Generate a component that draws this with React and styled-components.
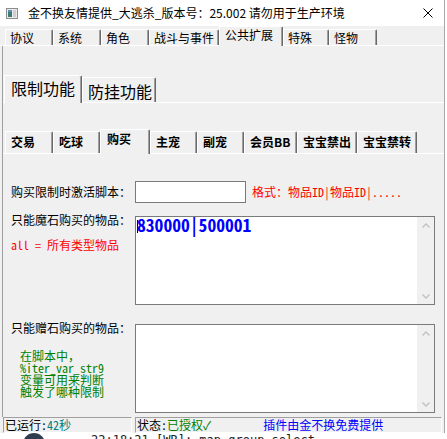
import React from "react";
import styled, { createGlobalStyle } from "styled-components";

const UI = `"Noto Sans CJK SC", "Noto Sans", sans-serif`;
const MONO = `"Noto Sans Mono CJK SC", "Noto Sans CJK SC", "Liberation Mono", monospace`;

const GlobalStyle = createGlobalStyle`
  html, body {
    margin: 0;
    padding: 0;
    background: #ffffff;
  }
  body {
    font-family: ${UI};
    color: #000;
  }
`;

// tab look for each level of the tab control
const TAB = {
  top: { ha: 20, h: 16, fs: 12, lh: 16, pt: 0, pta: 0, fw: 400, pl: 4 },
  mid: { ha: 28, h: 25, fs: 16, lh: 20, pt: 3, pta: 2, fw: 400, pl: 5 },
  sub: { ha: 25, h: 22, fs: 12, lh: 16, pt: 2, pta: 1, fw: 700, pl: 5 },
};

const topTabs = [
  ["协议", 48], ["系统", 48], ["角色", 48], ["战斗与事件", 70],
  ["公共扩展", 64, true], ["特殊", 46], ["怪物", 48],
];
const midTabs = [["限制功能", 78, true], ["防挂功能", 74]];
const subTabs = [
  ["交易", 48], ["吃球", 47], ["购买", 50, true], ["主宠", 47], ["副宠", 47],
  ["会员BB", 53], ["宝宝禁出", 60], ["宝宝禁转", 60],
];

export default function App() {
  return (
    <>
      <GlobalStyle />
      <Window>
        <TitleBar>
          <svg width="12" height="11" viewBox="0 0 12 11">
            <rect x="0.5" y="0.5" width="11" height="10" fill="#ececec" stroke="#8c8c8c" />
            <rect x="2" y="2" width="4" height="7" fill="#3d7a78" />
            <rect x="2" y="2" width="4" height="2" fill="#5b8fb0" />
            <rect x="7" y="2" width="3" height="7" fill="#cfcfcf" />
          </svg>
          <Title>金不换友情提供_大逃杀_版本号：25.002 请勿用于生产环境</Title>
          <svg width="10" height="10" viewBox="0 0 10 10">
            <path d="M0.5 0.5 L9.5 9.5 M9.5 0.5 L0.5 9.5" stroke="#000" strokeWidth="1" />
          </svg>
        </TitleBar>

        <TabStrip $size="top" $pl={5}>
          {topTabs.map(([t, w, a]) => (
            <Tab key={t} $size="top" $w={w} $active={a}>{t}</Tab>
          ))}
        </TabStrip>

        <Panel>
          <TabStrip $size="mid" $pl={1} $mt={29}>
            {midTabs.map(([t, w, a]) => (
              <Tab key={t} $size="mid" $w={w} $active={a}>{t}</Tab>
            ))}
          </TabStrip>

          <TabStrip $size="sub" $pl={2} $mt={26}>
            {subTabs.map(([t, w, a]) => (
              <Tab key={t} $size="sub" $w={w} $active={a}>{t}</Tab>
            ))}
          </TabStrip>

          <Form>
            <Row $center>
              <LabelCol>
                <Label>购买限制时激活脚本：</Label>
              </LabelCol>
              <Input />
              <Hint>格式：物品ID|物品ID|.....</Hint>
            </Row>

            <Row $mt={13}>
              <LabelCol>
                <Label $mt={-4}>只能魔石购买的物品：</Label>
                <Note $color="#ff0000" $mt={11} $pl={0}>all = 所有类型物品</Note>
              </LabelCol>
              <TextBox>
                <TextContent>
                  <Caret />830000|500001
                </TextContent>
                <Scrollbar />
              </TextBox>
            </Row>

            <Row $mt={19}>
              <LabelCol>
                <Label $mt={-4}>只能赠石购买的物品：</Label>
                <Note $color="#008000" $mt={14} $pl={9}>
                  在脚本中，<br />
                  %iter_var_str9<br />
                  变量可用来判断<br />
                  触发了哪种限制
                </Note>
              </LabelCol>
              <TextBox>
                <TextContent />
                <Scrollbar />
              </TextBox>
            </Row>
          </Form>
        </Panel>

        <StatusBar>
          <StatusPane $w={129}>
            已运行:<Colored $c="#008080">42秒</Colored>
          </StatusPane>
          <StatusPane $w={307}>
            状态: <Colored $c="#008000">已授权✓</Colored>
            <Colored $c="#0000ff" $ml={52}>插件由金不换免费提供</Colored>
          </StatusPane>
        </StatusBar>
      </Window>
      <Desktop>
        <Avatar />
        <DesktopText>22:18:21 [WR]: map group select</DesktopText>
      </Desktop>
    </>
  );
}

function Scrollbar() {
  return (
    <ScrollTrack>
      <svg width="8" height="5" viewBox="0 0 8 5">
        <path d="M0.5 4.5 L4 1 L7.5 4.5" fill="none" stroke="#c2c2c2" strokeWidth="1.4" />
      </svg>
      <svg width="8" height="5" viewBox="0 0 8 5">
        <path d="M0.5 0.5 L4 4 L7.5 0.5" fill="none" stroke="#c2c2c2" strokeWidth="1.4" />
      </svg>
    </ScrollTrack>
  );
}

const Window = styled.div`
  width: 445px;
  height: 433px;
  box-sizing: border-box;
  display: flex;
  flex-direction: column;
  background: #f0f0f0;
  border-right: 1px solid #a8a8a8;
`;

const TitleBar = styled.div`
  height: 26px;
  flex: none;
  display: flex;
  align-items: center;
  padding: 0 11px 0 6px;
  background: #ffffff;
`;

const Title = styled.div`
  flex: 1;
  margin-left: 10px;
  font: 12px/16px ${UI};
  white-space: nowrap;
`;

const TabStrip = styled.div`
  flex: none;
  display: flex;
  align-items: flex-end;
  height: ${(p) => TAB[p.$size].ha - 1}px;
  margin-top: ${(p) => p.$mt || 0}px;
  padding-left: ${(p) => p.$pl}px;
  border-bottom: 1px solid #ffffff;
`;

const Tab = styled.div`
  box-sizing: border-box;
  flex: none;
  width: ${(p) => p.$w}px;
  height: ${(p) => (p.$active ? TAB[p.$size].ha : TAB[p.$size].h)}px;
  margin-bottom: ${(p) => (p.$active ? -1 : 0)}px;
  padding: ${(p) => (p.$active ? TAB[p.$size].pta : TAB[p.$size].pt)}px 0 0
    ${(p) => TAB[p.$size].pl + (p.$active ? 1 : 0)}px;
  background: #f0f0f0;
  border-top: 1px solid #ffffff;
  border-left: 1px solid #ffffff;
  border-right: 1px solid #696969;
  box-shadow: inset -1px 0 #a0a0a0;
  border-top-right-radius: 2px;
  font-family: ${UI};
  font-size: ${(p) => TAB[p.$size].fs}px;
  line-height: ${(p) => TAB[p.$size].lh}px;
  font-weight: ${(p) => TAB[p.$size].fw};
  white-space: nowrap;
  overflow: hidden;
`;

const Panel = styled.div`
  flex: 1;
  display: flex;
  flex-direction: column;
  margin-left: 2px;
  border-left: 1px solid #a0a0a0;
`;

const Form = styled.div`
  display: flex;
  flex-direction: column;
  margin-top: 27px;
  padding-left: 8px;
`;

const Row = styled.div`
  display: flex;
  align-items: ${(p) => (p.$center ? "center" : "flex-start")};
  margin-top: ${(p) => p.$mt || 0}px;
`;

const LabelCol = styled.div`
  width: 124px;
  flex: none;
  display: flex;
  flex-direction: column;
`;

const Label = styled.div`
  margin-top: ${(p) => p.$mt || 0}px;
  font: 12px/16px ${MONO};
  white-space: nowrap;
`;

const Note = styled.div`
  margin-top: ${(p) => p.$mt}px;
  padding-left: ${(p) => p.$pl}px;
  color: ${(p) => p.$color};
  font: 12px/12px ${MONO};
  white-space: nowrap;
`;

const Input = styled.div`
  box-sizing: border-box;
  width: 111px;
  height: 22px;
  background: #ffffff;
  border: 1px solid #7a7a7a;
`;

const Hint = styled.div`
  margin-left: 6px;
  color: #ff0000;
  font: 12px/16px ${MONO};
  white-space: nowrap;
`;

const TextBox = styled.div`
  box-sizing: border-box;
  width: 300px;
  height: 89px;
  display: flex;
  background: #ffffff;
  border: 1px solid #7a7a7a;
`;

const TextContent = styled.div`
  flex: 1;
  padding-left: 1px;
  color: #0000ff;
  font: 700 17.6px/16px ${MONO};
  white-space: nowrap;
`;

const Caret = styled.span`
  display: inline-block;
  width: 0;
  height: 13px;
  margin-right: -1px;
  vertical-align: -1px;
  border-left: 1px solid #000;
`;

const ScrollTrack = styled.div`
  width: 17px;
  flex: none;
  display: flex;
  flex-direction: column;
  align-items: center;
  justify-content: space-between;
  padding: 6px 0 5px;
  box-sizing: border-box;
  background: #f0f0f0;
`;

const StatusBar = styled.div`
  flex: none;
  display: flex;
  gap: 3px;
  height: 16px;
  padding-left: 3px;
`;

const StatusPane = styled.div`
  box-sizing: border-box;
  width: ${(p) => p.$w}px;
  height: 16px;
  display: flex;
  align-items: center;
  padding-left: 1px;
  border-top: 1px solid #a0a0a0;
  border-left: 1px solid #a0a0a0;
  border-bottom: 1px solid #ffffff;
  border-right: 1px solid #ffffff;
  font: 12px/14px ${MONO};
  white-space: nowrap;
`;

const Colored = styled.span`
  color: ${(p) => p.$c};
  margin-left: ${(p) => p.$ml || 0}px;
`;

const Desktop = styled.div`
  height: 6px;
  display: flex;
  overflow: hidden;
  background: #ffffff;
`;

const Avatar = styled.div`
  width: 22px;
  height: 22px;
  margin-left: 23px;
  border-radius: 50%;
  background: #2e3d4e;
`;

const DesktopText = styled.div`
  margin: 1px 0 0 46px;
  font: 12px/12px "DejaVu Sans Mono", monospace;
  color: #222;
  white-space: nowrap;
`;
